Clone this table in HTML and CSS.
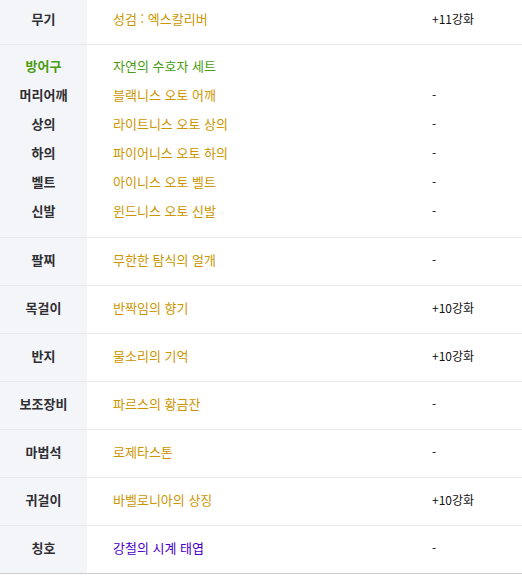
FILE: index.html
```html
<!DOCTYPE html>
<html lang="ko">
<head>
<meta charset="utf-8">
<link rel="stylesheet" href="styles.css">
</head>
<body>
<div class="equip">
  <div class="row first">
    <div class="label"><span>무기</span></div>
    <div class="items"><div class="line"><span class="name gold">성검 : 엑스칼리버</span><span class="grade">+11강화</span></div></div>
  </div>
  <div class="row group">
    <div class="label">
      <span class="green">방어구</span>
      <span>머리어깨</span>
      <span>상의</span>
      <span>하의</span>
      <span>벨트</span>
      <span>신발</span>
    </div>
    <div class="items">
      <div class="line"><span class="name green">자연의 수호자 세트</span><span class="grade"></span></div>
      <div class="line"><span class="name gold">블랙니스 오토 어깨</span><span class="grade">-</span></div>
      <div class="line"><span class="name gold">라이트니스 오토 상의</span><span class="grade">-</span></div>
      <div class="line"><span class="name gold">파이어니스 오토 하의</span><span class="grade">-</span></div>
      <div class="line"><span class="name gold">아이니스 오토 벨트</span><span class="grade">-</span></div>
      <div class="line"><span class="name gold">윈드니스 오토 신발</span><span class="grade">-</span></div>
    </div>
  </div>
  <div class="row">
    <div class="label"><span>팔찌</span></div>
    <div class="items"><div class="line"><span class="name gold">무한한 탐식의 얼개</span><span class="grade">-</span></div></div>
  </div>
  <div class="row">
    <div class="label"><span>목걸이</span></div>
    <div class="items"><div class="line"><span class="name gold">반짝임의 향기</span><span class="grade">+10강화</span></div></div>
  </div>
  <div class="row">
    <div class="label"><span>반지</span></div>
    <div class="items"><div class="line"><span class="name gold">물소리의 기억</span><span class="grade">+10강화</span></div></div>
  </div>
  <div class="row">
    <div class="label"><span>보조장비</span></div>
    <div class="items"><div class="line"><span class="name gold">파르스의 황금잔</span><span class="grade">-</span></div></div>
  </div>
  <div class="row">
    <div class="label"><span>마법석</span></div>
    <div class="items"><div class="line"><span class="name gold">로제타스톤</span><span class="grade">-</span></div></div>
  </div>
  <div class="row">
    <div class="label"><span>귀걸이</span></div>
    <div class="items"><div class="line"><span class="name gold">바벨로니아의 상징</span><span class="grade">+10강화</span></div></div>
  </div>
  <div class="row last">
    <div class="label"><span>칭호</span></div>
    <div class="items"><div class="line"><span class="name purple">강철의 시계 태엽</span><span class="grade">-</span></div></div>
  </div>
</div>
</body>
</html>
```

FILE: styles.css
```css
html, body {
  margin: 0;
  padding: 0;
  background: #ffffff;
}
body {
  font-family: "Noto Sans CJK KR", "Noto Sans", sans-serif;
  font-size: 12px;
  color: #222;
}
.equip {
  width: 522px;
}
.row {
  display: grid;
  grid-template-columns: 87px 1fr;
  border-bottom: 1px solid #e8e8e8;
  height: 47px;
}
.row.first {
  height: 44px;
}
.row.group {
  height: 192px;
}
.row.last {
  border-bottom-color: #cccccc;
}
.label {
  background: #f4f5f9;
  display: flex;
  flex-direction: column;
  align-items: center;
  justify-content: center;
  font-weight: bold;
  font-size: 13px;
  color: #2e2e33;
  padding-bottom: 4px;
}
.label span, .line {
  height: 29px;
  line-height: 29px;
}
.items {
  display: flex;
  flex-direction: column;
  justify-content: center;
  padding-left: 26px;
  padding-bottom: 4px;
}
.first .label, .first .items {
  padding-bottom: 7px;
}
.group .label, .group .items {
  padding-top: 6px;
  padding-bottom: 12px;
}
.line {
  display: flex;
  align-items: center;
}
.name {
  width: 319px;
  font-size: 13px;
}
.grade {
  color: #111;
}
.gold { color: #cc9600; }
.green { color: #4a9c12; }
.purple { color: #4a00c8; }
```
